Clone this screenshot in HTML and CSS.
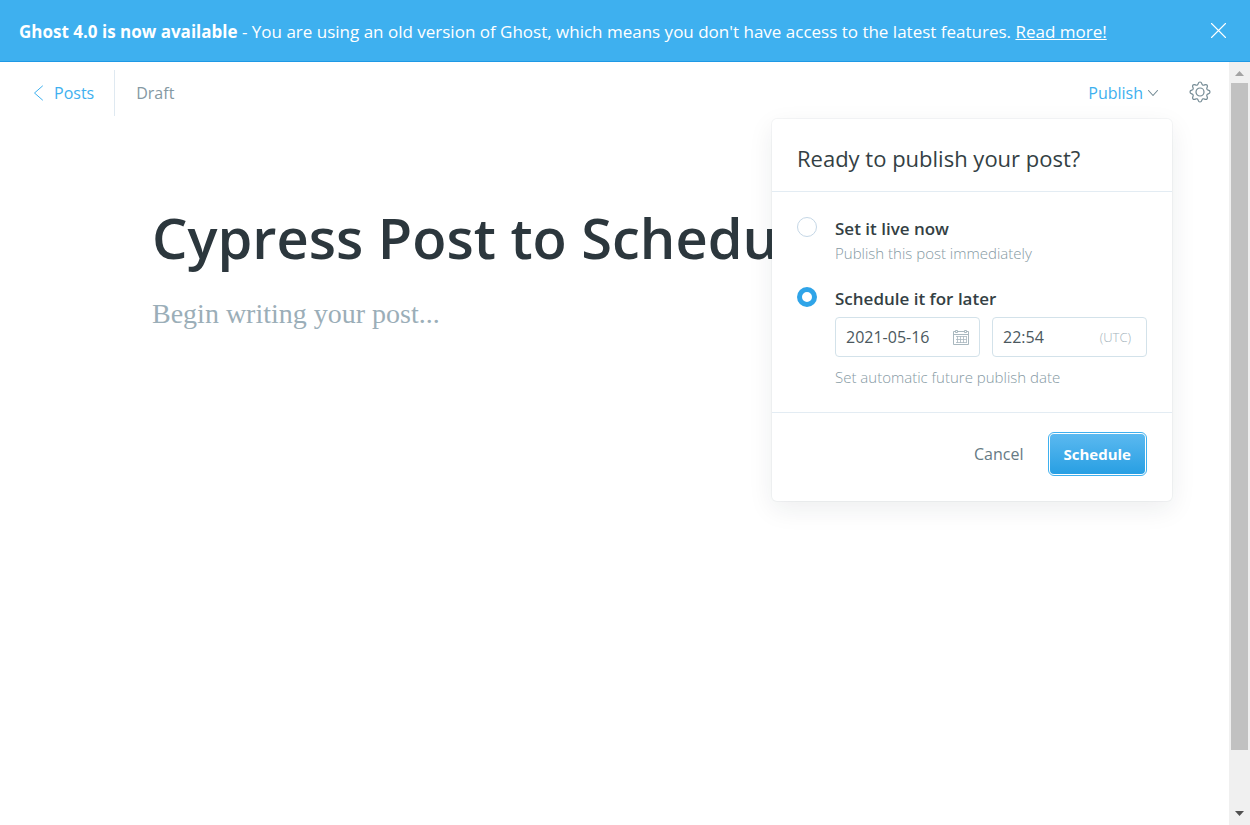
FILE: index.html
```html
<!DOCTYPE html>
<html lang="en">
<head>
<meta charset="utf-8">
<meta name="viewport" content="width=device-width, initial-scale=1">
<title>Ghost editor</title>
<link rel="stylesheet" href="styles.css">
</head>
<body class="app">
  <aside class="banner">
    <p class="banner-text"><strong>Ghost 4.0 is now available</strong> - You are using an old version of Ghost, which means you don't have access to the latest features. <a class="banner-link" href="#">Read more!</a></p>
    <button class="icon-button banner-close" type="button" aria-label="Close">
      <svg width="17" height="17" viewBox="0 0 17 17" fill="none" stroke="currentColor" stroke-width="1.1" stroke-linecap="round"><path d="M1.5 1.5l14 14M15.5 1.5l-14 14"/></svg>
    </button>
  </aside>
  <div class="viewport">
    <div class="editor">
      <header class="toolbar">
        <a class="back-link" href="#">
          <svg width="12" height="16" viewBox="0 0 12 16" fill="none" stroke="currentColor" stroke-linecap="round" stroke-linejoin="round"><path d="M9.500 1L1.500 8l8 7"/></svg>
          Posts</a>
        <span class="status">Draft</span>
        <div class="publish">
          <button class="publish-trigger" type="button" aria-expanded="true">Publish
            <svg width="12" height="8" viewBox="0 0 12 8" fill="none" stroke="#738a94" stroke-width="1.1" stroke-linecap="round" stroke-linejoin="round"><path d="M1.500 1.500L6 6.500l4.500-5"/></svg>
          </button>
          <form class="menu">
            <h2 class="menu-title">Ready to publish your post?</h2>
            <div class="menu-body">
              <div class="option">
                <input class="radio" type="radio" name="when" id="live">
                <div class="option-main">
                  <label class="option-label" for="live">Set it live now</label>
                  <p class="option-note">Publish this post immediately</p>
                </div>
              </div>
              <div class="option">
                <input class="radio" type="radio" name="when" id="later" checked>
                <div class="option-main">
                  <label class="option-label" for="later">Schedule it for later</label>
                  <div class="fields">
                    <div class="field field-date">
                      <input class="field-input" type="text" value="2021-05-16" aria-label="Publish date">
                      <svg width="16" height="16" viewBox="0 0 16 16" fill="none" stroke="#a9b8bf"><path d="M.5 2.500h15v13H.5zM.5 5.500h15"/><path d="M3 7.500h10.500M3 10.500h10.500M3 13.500h10.500M4.500 7v7M7.500 7v7M10.500 7v7M13.500 7v7" stroke-width=".8"/><path d="M2.500 1.500h2v2h-2zM11.500 1.500h2v2h-2z" fill="#fff"/></svg>
                    </div>
                    <div class="field field-time">
                      <input class="field-input" type="text" value="22:54" aria-label="Publish time">
                      <span class="zone">(UTC)</span>
                    </div>
                  </div>
                  <p class="option-note">Set automatic future publish date</p>
                </div>
              </div>
            </div>
            <footer class="menu-footer">
              <button class="cancel" type="button">Cancel</button>
              <button class="schedule" type="button"><span class="schedule-face">Schedule</span></button>
            </footer>
          </form>
        </div>
        <button class="icon-button settings" type="button" aria-label="Settings">
          <svg width="22" height="22" viewBox="0 0 22 22" fill="none" stroke="currentColor" stroke-width="1.2" stroke-linejoin="round"><circle cx="11" cy="11" r="4"/><path d="M9.200 2.700C9.500 1.500 10 1 11 1s1.500.5 1.800 1.700c.4 1.500 1.500 1.900 2.800 1.200 1.100-.6 1.700-.6 2.400.1s.7 1.300.1 2.400c-.7 1.300-.3 2.400 1.200 2.800 1.200.3 1.700.8 1.700 1.800s-.5 1.500-1.700 1.800c-1.500.4-1.900 1.500-1.200 2.800.6 1.100.6 1.700-.1 2.400s-1.300.7-2.400.1c-1.300-.7-2.400-.3-2.800 1.200C12.500 20.500 12 21 11 21s-1.500-.5-1.800-1.700c-.4-1.500-1.500-1.900-2.800-1.200-1.100.6-1.700.6-2.400-.1s-.7-1.300-.1-2.400c.7-1.300.3-2.400-1.200-2.800C1.500 12.500 1 12 1 11s.5-1.500 1.700-1.800c1.500-.4 1.900-1.500 1.200-2.800C3.300 5.300 3.300 4.700 4 4s1.300-.7 2.400-.1c1.300.7 2.400.3 2.800-1.200z"/></svg>
        </button>
      </header>
      <main class="post">
        <input class="post-title" type="text" value="Cypress Post to Schedule" aria-label="Post title">
        <textarea class="post-body" placeholder="Begin writing your post..." aria-label="Post body"></textarea>
      </main>
    </div>
    <div class="scrollbar" aria-hidden="true">
      <svg class="arrow" width="21" height="21" viewBox="0 0 21 21" fill="#a3a3a3"><path d="M6 14h9l-4.500-5z"/></svg>
      <div class="track"><div class="thumb"></div></div>
      <svg class="arrow" width="21" height="21" viewBox="0 0 21 21" fill="#505050"><path d="M6 7h9l-4.500 5z"/></svg>
    </div>
  </div>
</body>
</html>
```
FILE: styles.css
```css
* {
  box-sizing: border-box;
}

.app {
  display: flex;
  flex-direction: column;
  height: 100vh;
  margin: 0;
  overflow: hidden;
  background: #fff;
  color: #343f44;
  font-family: "Open Sans", "Noto Sans", sans-serif;
  font-size: 16px;
}

button,
input,
textarea {
  margin: 0;
  padding: 0;
  border: 0;
  background: none;
  color: inherit;
  font: inherit;
  outline: 0;
}

p,
h2 {
  margin: 0;
}

svg {
  display: block;
  flex: none;
}

.icon-button {
  display: flex;
  flex: none;
}

.banner {
  display: flex;
  align-items: center;
  justify-content: space-between;
  padding: 17px 23px 17px 19px;
  border-bottom: 1px solid #1f99e5;
  background: #3eb0ef;
  color: #fff;
  font-size: 17px;
  line-height: 25px;
}

.banner-text {
  padding-top: 2px;
  white-space: nowrap;
}

.banner-link {
  color: inherit;
}

.viewport {
  display: flex;
  flex: 1;
  min-height: 0;
}

.editor {
  flex: 1;
  min-width: 0;
}

.toolbar {
  display: flex;
  align-items: center;
  padding: 8px 18px 0 33px;
}

.back-link {
  display: flex;
  align-items: center;
  gap: 9px;
  height: 46px;
  padding-right: 20px;
  border-right: 1px solid #dfe9f1;
  color: #3eb0ef;
  text-decoration: none;
}

.status {
  flex: 1;
  padding-left: 21px;
  color: #8599a3;
}

.publish {
  position: relative;
  z-index: 1;
  margin-right: 17px;
}

.publish-trigger {
  display: flex;
  align-items: center;
  gap: 4px;
  padding-right: 13px;
  color: #3eb0ef;
  line-height: 20px;
}

.settings {
  padding-bottom: 2px;
  color: #738a94;
}

.menu {
  position: absolute;
  top: 36px;
  right: 0;
  width: 400px;
  border-radius: 5px;
  background: #fff;
  box-shadow: 0 0 0 1px rgba(99, 114, 130, 0.06), 0 8px 26px rgba(27, 39, 51, 0.08);
}

.menu-title {
  padding: 23px 25px 17px;
  border-bottom: 1px solid #e3ecf3;
  font-size: 22px;
  font-weight: 400;
  line-height: 32px;
}

.menu-body {
  display: grid;
  gap: 21px;
  padding: 25px 25px 22px;
}

.option {
  display: flex;
  gap: 18px;
}

.radio {
  flex: none;
  width: 20px;
  height: 20px;
  border: 1px solid #c5d7e6;
  border-radius: 50%;
  appearance: none;
}

.radio:checked {
  border: 5px solid #2fa4e8;
}

.option-main {
  flex: 1;
}

.option-label {
  display: block;
  font-size: 17px;
  font-weight: 600;
  line-height: 24px;
}

.option-note {
  color: #8599a3;
  font-size: 15px;
  font-weight: 300;
  line-height: 25px;
}

.fields {
  display: flex;
  gap: 12px;
  margin: 6px 0 8px;
}

.field {
  display: flex;
  align-items: center;
  height: 40px;
  padding: 0 10px;
  border: 1px solid #d3e2ea;
  border-radius: 4px;
}

.field-date {
  flex: 1 1 145px;
}

.field-time {
  flex: 1 1 155px;
  padding-right: 15px;
}

.field-input {
  flex: 1;
  width: 0;
  color: #4b585e;
}

.zone {
  color: #a3b3bb;
  font-size: 13px;
  font-weight: 300;
}

.menu-footer {
  display: flex;
  align-items: center;
  justify-content: flex-end;
  gap: 24px;
  padding: 19px 25px 25px;
  border-top: 1px solid #e3ecf3;
}

.cancel {
  color: #667a84;
}

.schedule {
  padding: 1px;
  border: 1px solid #3eb0ef;
  border-radius: 6px;
  color: #fff;
  font-size: 15px;
  font-weight: 700;
}

.schedule-face {
  display: block;
  padding: 0 14px;
  border-radius: 4px;
  background: linear-gradient(#5bb9f0, #289fe3);
  line-height: 40px;
}

.post {
  display: flex;
  flex-direction: column;
  padding: 73px 152px 0;
}

.post-title {
  height: 96px;
  color: #2c373d;
  font-size: 56px;
  font-weight: 600;
}

.post-body {
  height: 200px;
  margin-top: 9px;
  font-family: "Liberation Serif", serif;
  font-size: 28px;
  line-height: 40px;
  resize: none;
}

.post-body::placeholder {
  color: #9baeb8;
}

.scrollbar {
  display: flex;
  flex-direction: column;
  flex: none;
  background: #f0f0f0;
}

.track {
  flex: 1;
  padding: 0 2px;
}

.thumb {
  height: calc(100% * 37 / 40);
  background: #c1c1c1;
}
```
